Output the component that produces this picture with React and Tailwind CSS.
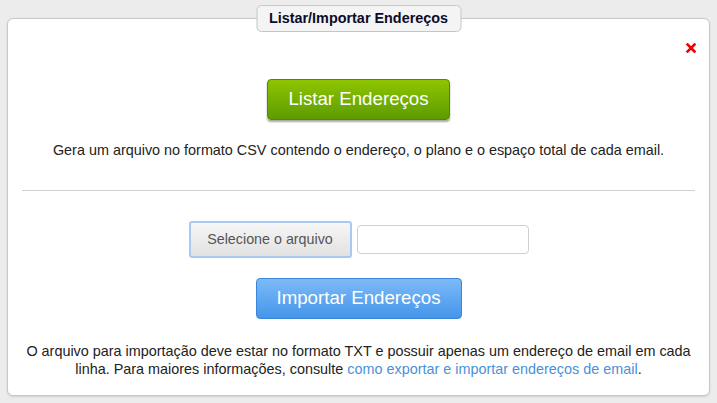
import React from "react";

export default function App() {
  return (
    <div
      className="relative w-[717px] h-[403px] overflow-hidden bg-[#ececec] pt-[18px] px-[7px]"
      style={{ fontFamily: '"Liberation Sans", Arial, sans-serif' }}
    >
      <div className="relative h-[378px] rounded-[6px] border border-[#c8c8c8] bg-white shadow-[0_1px_2px_rgba(0,0,0,0.12)]">
        <div className="absolute left-1/2 -translate-x-1/2 top-[-14px] h-[27px] w-[205px] rounded-[5px] border border-[#c6c6c6] bg-[#f4f4f4] flex items-center justify-center text-[14.4px] font-bold text-[#0c0c2a]">
          Listar/Importar Endereços
        </div>
        <div className="flex justify-end pr-[13px] pt-[24px] h-[60px]">
          <svg width="10" height="10" viewBox="0 0 10 10">
            <path d="M1.5 1.5 L8.5 8.5 M8.5 1.5 L1.5 8.5" stroke="#f00000" strokeWidth="2.6" strokeLinecap="square" />
          </svg>
        </div>
        <div className="flex flex-col items-center">
          <button className="h-[41px] w-[183px] rounded-[4px] border border-[#4f8a00] bg-gradient-to-b from-[#8ec500] to-[#5d9c00] text-white text-[18.7px] shadow-[0_2px_2px_rgba(0,0,0,0.35)]">
            Listar Endereços
          </button>
          <p className="mt-[21px] text-[14.4px] leading-[18px] text-[#222]">
            Gera um arquivo no formato CSV contendo o endereço, o plano e o espaço total de cada email.
          </p>
        </div>
        <div className="mx-[14px] mt-[31px] border-t border-[#cfcfcf]" />
        <div className="flex flex-col items-center">
          <div className="mt-[30px] flex items-center gap-[5px]">
            <button className="h-[37px] w-[163px] rounded-[3px] border-2 border-[#a9c9f2] bg-gradient-to-b from-[#f6f6f6] to-[#e2e2e2] text-[14.3px] text-[#555]">
              Selecione o arquivo
            </button>
            <div className="h-[29px] w-[172px] rounded-[4px] border border-[#cfcfcf] bg-white" />
          </div>
          <button className="mt-[20px] h-[41px] w-[206px] rounded-[4px] border border-[#3a86d8] bg-gradient-to-b from-[#7cbaf8] to-[#4495ea] text-white text-[18.7px]">
            Importar Endereços
          </button>
          <p className="mt-[23px] px-[12px] text-center text-[14.4px] leading-[18px] text-[#222]">
            O arquivo para importação deve estar no formato TXT e possuir apenas um endereço de email em cada linha. Para maiores informações, consulte{" "}
            <a className="text-[#4a90da]">como exportar e importar endereços de email</a>.
          </p>
        </div>
      </div>
    </div>
  );
}
